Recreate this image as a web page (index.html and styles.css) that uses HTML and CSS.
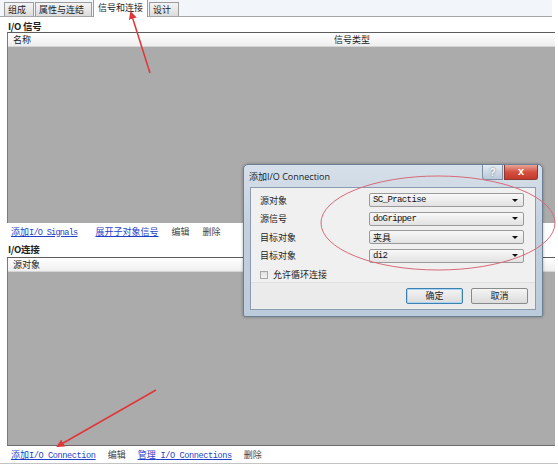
FILE: index.html
```html
<!DOCTYPE html>
<html>
<head>
<meta charset="utf-8">
<link rel="stylesheet" href="styles.css">
</head>
<body>
<div class="page">
  <div class="tabs">
    <div class="tab">组成</div>
    <div class="tab">属性与连结</div>
    <div class="tab active">信号和连接</div>
    <div class="tab">设计</div>
  </div>
  <div class="title t1">I/O 信号</div>
  <div class="listbox box1">
    <div class="lhead">
      <span class="col-name">名称</span>
      <span class="col-type">信号类型</span>
    </div>
    <div class="lbody"></div>
  </div>
  <div class="links">
    <a class="link"><span class="zh">添加</span>I/O Signals</a>
    <a class="link zhlink">展开子对象信号</a>
    <span class="plain">编辑</span>
    <span class="plain">删除</span>
  </div>
  <div class="title t2">I/O连接</div>
  <div class="listbox box2">
    <div class="lhead">
      <span class="col-name">源对象</span>
    </div>
    <div class="lbody"></div>
  </div>
  <div class="links bottom">
    <a class="link wide"><span class="zh">添加</span>I/O Connection</a>
    <span class="plain">编辑</span>
    <a class="link wide"><span class="zh">管理</span> I/O Connections</a>
    <span class="plain">删除</span>
  </div>
</div>

<div class="dialog">
  <div class="dtitle">
    <span class="dtext">添加I/O Connection</span>
    <div class="dbtns">
      <div class="help">?</div>
      <div class="close">x</div>
    </div>
  </div>
  <div class="client">
    <div class="form">
      <div class="frow"><span class="flabel">源对象</span><div class="combo"><span>SC_Practise</span><i class="arrow"></i></div></div>
      <div class="frow"><span class="flabel">源信号</span><div class="combo"><span>doGripper</span><i class="arrow"></i></div></div>
      <div class="frow"><span class="flabel">目标对象</span><div class="combo"><span class="zhc">夹具</span><i class="arrow"></i></div></div>
      <div class="frow"><span class="flabel">目标对象</span><div class="combo"><span>di2</span><i class="arrow"></i></div></div>
      <div class="check"><i class="cbox"></i><span>允许循环连接</span></div>
    </div>
    <div class="btnbar">
      <div class="btn default">确定</div>
      <div class="btn">取消</div>
    </div>
  </div>
</div>

<svg class="marks" width="558" height="464" viewBox="0 0 558 464">
  <defs>
    <marker id="ah" markerWidth="8" markerHeight="8" refX="6" refY="4" orient="auto" markerUnits="userSpaceOnUse">
      <path d="M0,0 L8,4 L0,8 Z" fill="#e0363a"/>
    </marker>
  </defs>
  <line x1="150" y1="73" x2="131" y2="13" stroke="#e0363a" stroke-width="1.5" marker-end="url(#ah)"/>
  <line x1="156" y1="390" x2="58" y2="446" stroke="#e0363a" stroke-width="1.5" marker-end="url(#ah)"/>
  <ellipse cx="438" cy="223" rx="117" ry="47" fill="none" stroke="#d86a78" stroke-width="1"/>
</svg>
</body>
</html>
```

FILE: styles.css
```css
html, body {
  margin: 0;
  padding: 0;
  background: #ffffff;
}
body {
  width: 558px;
  height: 464px;
  overflow: hidden;
  position: relative;
  font-family: "Noto Sans CJK SC", "Noto Sans", sans-serif;
  font-size: 9px;
  color: #222;
}
.page {
  display: flex;
  flex-direction: column;
  width: 558px;
}
.tabs {
  height: 17px;
  width: 552px;
  background: #f2f6fa;
  border-bottom: 1px solid #a6a6a6;
  display: flex;
  align-items: flex-end;
  padding-left: 4px;
  box-sizing: border-box;
  gap: 1px;
}
.tab {
  height: 14px;
  line-height: 14px;
  padding: 0 7px 0 3px;
  background: linear-gradient(#f4f4f4, #dcdcdc);
  border: 1px solid #9c9c9c;
  border-bottom: none;
  box-sizing: border-box;
  font-size: 9px;
  color: #222;
}
.tab.active {
  line-height: 16px;
  background: #ffffff;
  margin-bottom: -1px;
  height: 18px;
  padding: 0 4px 0 4px;
}
.title {
  font-weight: bold;
  padding-left: 8px;
  font-size: 9.5px;
  height: 15px;
  line-height: 18px;
  letter-spacing: -0.3px;
}
.title.t2 {
  height: 18px;
  line-height: 20px;
}
.listbox {
  margin-left: 7px;
  width: 548px;
  border-top: 1px solid #5c5c5c;
  border-left: 1px solid #7a7a7a;
  display: flex;
  flex-direction: column;
  box-sizing: border-box;
}
.lhead {
  height: 13px;
  line-height: 13px;
  background: linear-gradient(#ffffff, #eeeeee);
  border-bottom: 1px solid #d4d4d4;
  display: flex;
}
.col-name {
  padding-left: 5px;
  width: 321px;
}
.lbody {
  background: #ababab;
}
.box1 .lbody { height: 176px; }
.box2 .lbody { height: 173px; border-bottom: 1px solid #6a6a6a; }
.links {
  height: 16px;
  display: flex;
  align-items: center;
  padding-left: 11px;
  gap: 13px;
}
.links.bottom {
  height: 17px;
  gap: 12px;
  width: 553px;
  border-bottom: 1px solid #c4c4c4;
}
.link {
  color: #1f3fc9;
  text-decoration: underline;
  font-family: "Liberation Mono", monospace;
  font-size: 8.6px;
  letter-spacing: -0.75px;
  white-space: pre;
}
.link.wide {
  letter-spacing: -0.4px;
}
.link .zh, .zhlink {
  font-family: "Noto Sans CJK SC", sans-serif;
  font-size: 9px;
  letter-spacing: 0;
}
.zhlink { margin-left: 5px; }
.plain {
  color: #444;
  font-size: 9px;
}

/* dialog */
.dialog {
  position: absolute;
  left: 243px;
  top: 164px;
  width: 300px;
  height: 153px;
  box-sizing: border-box;
  background: linear-gradient(#d6e0ea, #c3d0de 40%, #bccbdb);
  border: 1px solid #6d7f93;
  border-radius: 5px 5px 2px 2px;
  padding: 0 6px 6px 6px;
  display: flex;
  flex-direction: column;
  box-shadow: 0 0 3px rgba(0,0,0,0.35);
}
.dtitle {
  height: 22px;
  display: flex;
  align-items: flex-start;
  justify-content: space-between;
}
.dtext {
  font-family: "Open Sans", "Noto Sans CJK SC", sans-serif;
  font-size: 9px;
  line-height: 23px;
  color: #1a1a1a;
  margin-left: -1px;
}
.dbtns {
  display: flex;
  gap: 1px;
  margin-right: -2px;
}
.help {
  width: 21px;
  height: 15px;
  background: linear-gradient(#e4ecf4, #b9c8d8);
  border: 1px solid #7f8fa3;
  border-top: none;
  border-radius: 0 0 0 3px;
  color: #fff;
  font-weight: bold;
  text-align: center;
  line-height: 15px;
  font-size: 10px;
  text-shadow: 0 0 2px #4a5a70;
  font-family: "Liberation Sans", sans-serif;
  box-sizing: border-box;
}
.close {
  width: 34px;
  height: 15px;
  background: linear-gradient(#e9a598, #d4503f 50%, #c23a2a);
  border: 1px solid #8a3a32;
  border-top: none;
  border-radius: 0 0 3px 0;
  color: #fff;
  font-weight: bold;
  text-align: center;
  line-height: 13px;
  font-size: 11px;
  font-family: "Liberation Sans", sans-serif;
  box-sizing: border-box;
}
.client {
  flex: 1;
  background: #f0f0f0;
  border: 1px solid #8b9bb0;
  display: flex;
  flex-direction: column;
}
.form {
  flex: 1;
  padding: 3px 11px 0 9px;
  display: flex;
  flex-direction: column;
}
.frow {
  height: 18.5px;
  display: flex;
  align-items: center;
  justify-content: space-between;
}
.flabel {
  font-size: 9px;
  color: #222;
}
.combo {
  width: 155px;
  height: 14px;
  box-sizing: border-box;
  border: 1px solid #9a9a9a;
  border-radius: 2px;
  background: linear-gradient(#f8f8f8, #e2e2e2);
  display: flex;
  align-items: center;
  justify-content: space-between;
  padding: 0 5px 0 3px;
  font-family: "Liberation Mono", monospace;
  font-size: 9px;
  letter-spacing: -0.6px;
  color: #111;
}
.combo .zhc {
  font-family: "Noto Sans CJK SC", sans-serif;
  font-size: 9px;
  letter-spacing: 0;
}
.arrow {
  width: 0;
  height: 0;
  border-left: 3px solid transparent;
  border-right: 3px solid transparent;
  border-top: 3px solid #111;
}
.check {
  margin-top: 3px;
  display: flex;
  align-items: center;
  gap: 5px;
  font-size: 9px;
}
.cbox {
  width: 8px;
  height: 8px;
  border: 1px solid #a8a8a8;
  background: linear-gradient(#e0e0e0, #f4f4f4);
  box-sizing: border-box;
}
.btnbar {
  height: 26px;
  border-top: 1px solid #dfdfdf;
  background: #ebebeb;
  display: flex;
  justify-content: flex-end;
  align-items: center;
  gap: 8px;
  padding-right: 7px;
}
.btn {
  width: 57px;
  height: 16px;
  box-sizing: border-box;
  border: 1px solid #8a8a8a;
  border-radius: 2px;
  background: linear-gradient(#f4f4f4, #dcdcdc);
  text-align: center;
  line-height: 14px;
  font-size: 9px;
}
.btn.default {
  border-color: #3c7fb1;
  box-shadow: inset 0 0 0 1px #a9d6f3;
}
.marks {
  position: absolute;
  left: 0;
  top: 0;
  pointer-events: none;
}
```
